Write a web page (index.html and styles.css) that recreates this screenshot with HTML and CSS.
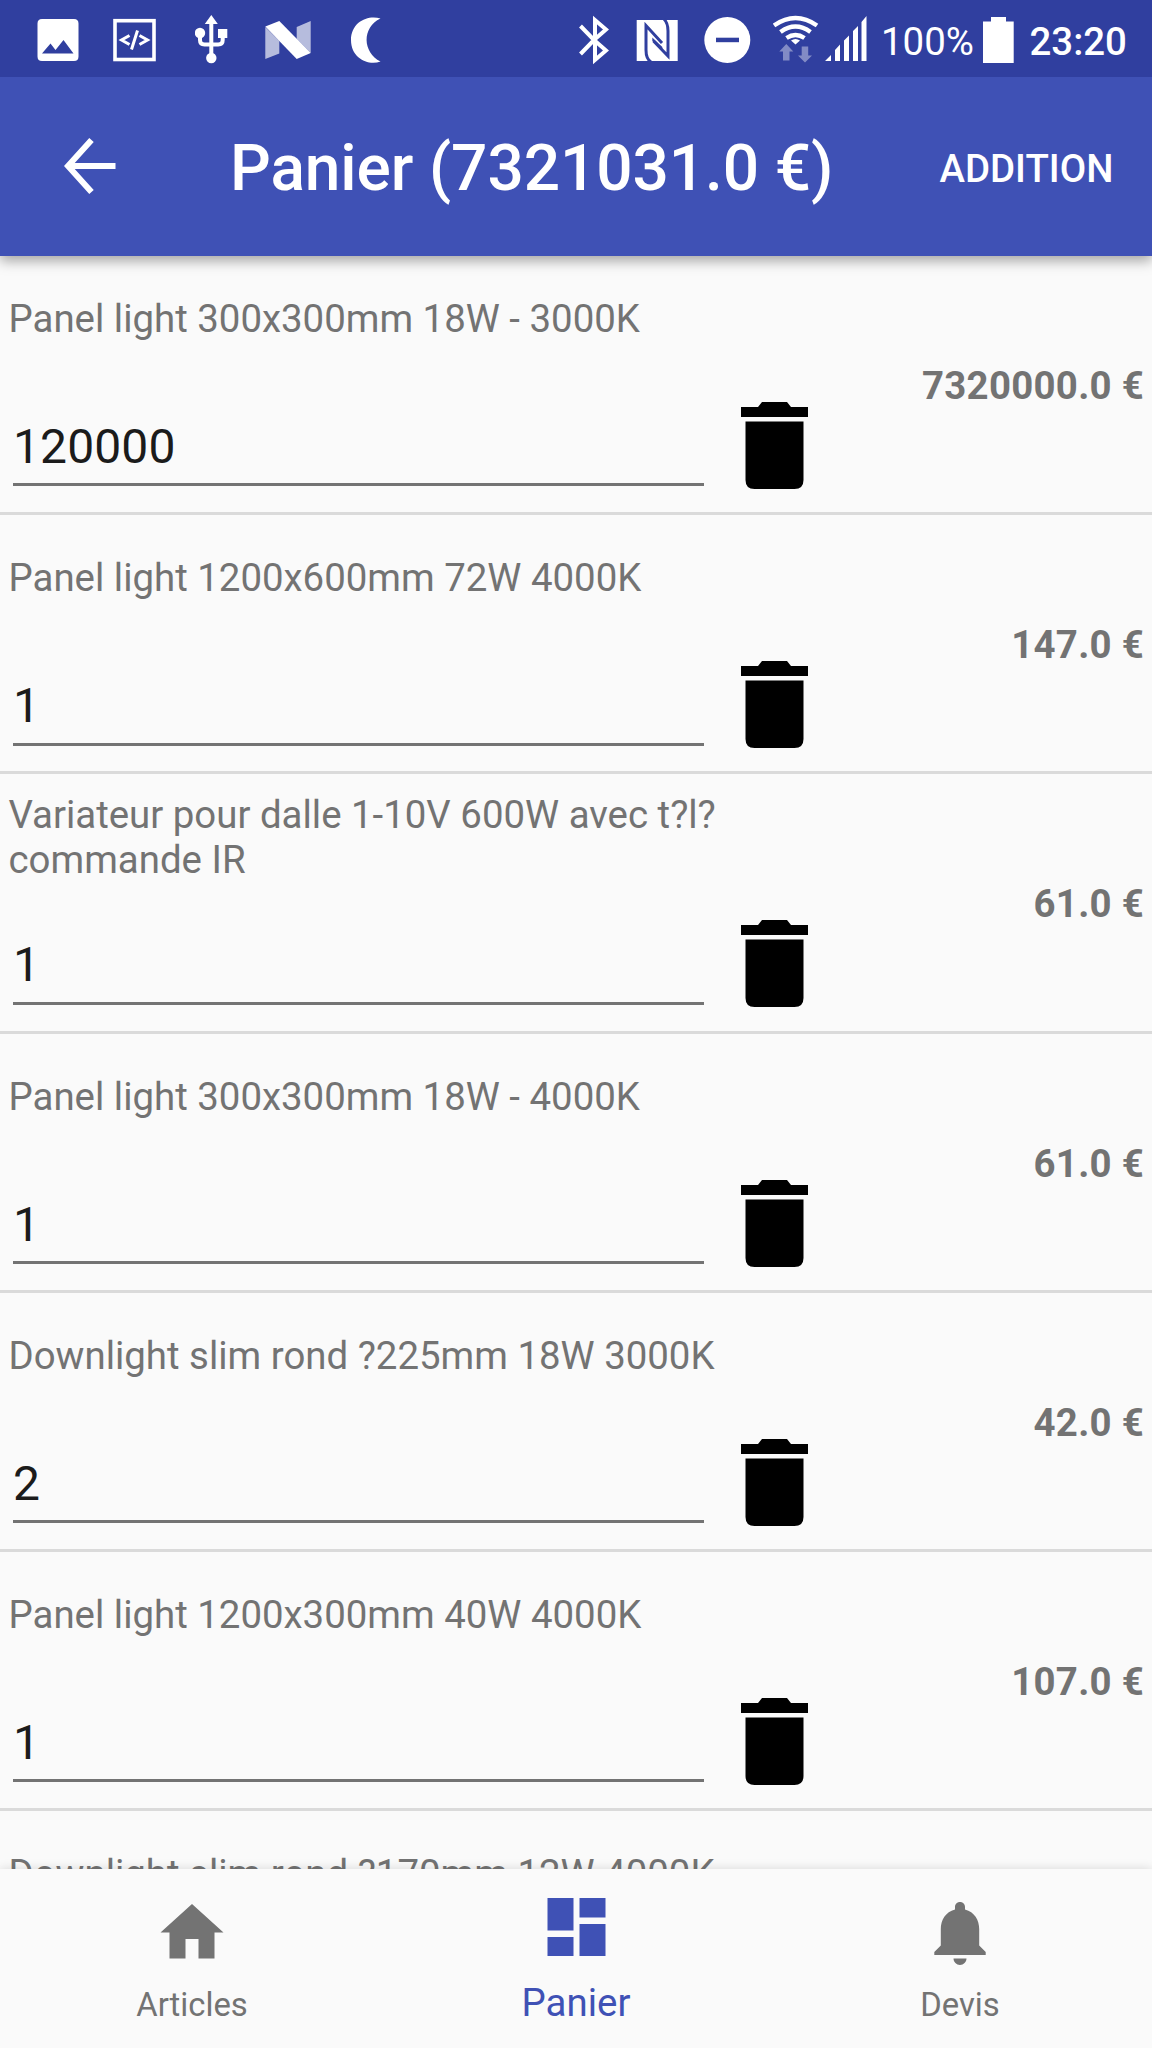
FILE: index.html
```html
<!DOCTYPE html>
<html lang="fr">
<head>
<meta charset="utf-8">
<title>Panier</title>
<link rel="stylesheet" href="styles.css">
</head>
<body>
<svg class="defs" aria-hidden="true">
  <symbol id="trash" viewBox="0 0 67 87" preserveAspectRatio="none">
    <path d="M0 5h17l4-5h25l4 5h17v10H0zM4.500 19.500h58v58.500q0 9-9 9h-40q-9 0-9-9z"/>
  </symbol>
</svg>
<div class="screen">
  <div class="status">
    <svg class="image" width="42" height="76" viewBox="37 0 42 76"><path fill="#fff" fill-rule="evenodd" d="M42 19h32q4.500 0 4.500 4.500v33q0 4.500-4.500 4.500h-32q-4.500 0-4.500-4.500v-33q0-4.500 4.500-4.500zM42 53.500h31.500l-10-13.500-8 10-5-6.500z"/></svg>
    <svg class="code" width="43" height="76" viewBox="113 0 43 76" fill="none" stroke="#fff"><rect x="115" y="20.700" width="39" height="38.800" stroke-width="3.600"/><path stroke-width="3" d="M129.500 35.500l-8 4.500 8 4.500M139.500 35.500l8 4.500-8 4.500M137.500 30.500l-6 19"/></svg>
    <svg class="usb" width="34" height="76" viewBox="195 0 34 76"><path fill="#fff" d="M211.300 15l6.500 9h-13zM218 29h9.300v9h-9.300z"/><circle cx="200" cy="33" r="5.200" fill="#fff"/><circle cx="211.300" cy="58" r="5.200" fill="#fff"/><path fill="none" stroke="#fff" stroke-width="4" d="M211.300 22v36M200 33v7q0 4.500 4.500 4.500h13.700q4.500 0 4.500-4.500v-7"/></svg>
    <svg class="nougat" width="46" height="76" viewBox="265 0 46 76" fill="#fff"><path opacity=".65" d="M265.300 27l14 14v12.500l-14 5.500zM310.700 21v32l-14-14v-12z"/><path d="M265.300 26.500l14-5.500 31.400 32-14 6z"/></svg>
    <svg class="moon" width="30" height="76" viewBox="351 0 30 76"><path fill="#fff" d="M380.500 18.500c-12-4-29.500 3-29.500 21.500s17.500 26 29.500 21.500c-18-9-19-34 0-43z"/></svg>
    <svg class="bt" width="30" height="76" viewBox="579 0 30 76"><path fill="none" stroke="#fff" stroke-width="4" d="M580.500 26l13.500 14 12-10.500-11-9.500v40l11-9.500-12-10.500-13.500 14"/></svg>
    <svg class="nfc" width="42" height="76" viewBox="636 0 42 76"><path fill="#fff" d="M636.700 20h41v41h-41z"/><path fill="none" stroke="#303f9f" stroke-width="3" d="M651 62q-5-3-5-12V25.500L662 43M664 19q4 4 4 12v25L653.500 41"/><path fill="#303f9f" d="M652.300 37.500l10 9.500v3l-10-9z"/></svg>
    <svg class="dnd" width="47" height="76" viewBox="704 0 47 76"><circle cx="727.300" cy="40" r="23" fill="#fff"/><path fill="#303f9f" d="M716 37.700h23v4.500h-23z"/></svg>
    <svg class="wifi" width="46" height="76" viewBox="773 0 46 76"><path fill="none" stroke="#fff" stroke-width="4.400" d="M774 25.500q21.500-15 43 0M780.500 32q15-11 30 0M786.500 38q9-6 18 0"/><path fill="#fff" d="M791 40.500q4.500-3 9 0l-4.500 4z"/><path fill="#fff" opacity=".4" d="M779.300 51.500l7-7.500 7 7.500h-3.800v9h-6.500v-9zM798 55.500l7 7 7-7h-3.800v-9h-6.500v9z"/></svg>
    <svg class="signal" width="42" height="76" viewBox="825 0 42 76"><path fill="#fff" d="M825 61l6-6v6zM835 61V50l5-5.500V61zM844 61V40.500l5-5V61zM853 61V31l5-5v35zM861.500 61V22l5-6v45z"/></svg>
    <span class="percent">100%</span>
    <svg class="battery" width="31" height="76" viewBox="983 0 31 76"><path fill="#fff" d="M991 17h15v4.500h7.700V63H983V21.500h8z"/></svg>
    <span class="clock">23:20</span>
  </div>
  <header class="toolbar">
    <svg class="back" width="52" height="58" viewBox="0 0 52 58"><path fill="none" stroke="#fff" stroke-width="6" d="M51.500 29H5M27.500 3L4 29 27.500 55"/></svg>
    <h1 class="title">Panier (7321031.0 €)</h1>
    <span class="action">ADDITION</span>
  </header>
  <main class="list">
    <div class="row"><div class="name">Panel light 300x300mm 18W - 3000K</div><div class="qty">120000</div><svg class="trash"><use href="#trash"/></svg><div class="price">7320000.0 €</div></div>
    <div class="row"><div class="name">Panel light 1200x600mm 72W 4000K</div><div class="qty">1</div><svg class="trash"><use href="#trash"/></svg><div class="price">147.0 €</div></div>
    <div class="row"><div class="name">Variateur pour dalle 1-10V 600W avec t?l?<br>commande IR</div><div class="qty">1</div><svg class="trash"><use href="#trash"/></svg><div class="price">61.0 €</div></div>
    <div class="row"><div class="name">Panel light 300x300mm 18W - 4000K</div><div class="qty">1</div><svg class="trash"><use href="#trash"/></svg><div class="price">61.0 €</div></div>
    <div class="row"><div class="name">Downlight slim rond ?225mm 18W 3000K</div><div class="qty">2</div><svg class="trash"><use href="#trash"/></svg><div class="price">42.0 €</div></div>
    <div class="row"><div class="name">Panel light 1200x300mm 40W 4000K</div><div class="qty">1</div><svg class="trash"><use href="#trash"/></svg><div class="price">107.0 €</div></div>
    <div class="row"><div class="name">Downlight slim rond ?170mm 12W 4000K</div></div>
  </main>
  <nav class="nav">
    <div class="tab">
      <svg class="home" width="64" height="55" viewBox="0 0 64 55"><path fill="#737373" d="M32 0l31.500 28.500H54.500V54.500H38.500V35H25.500V54.500H9.500V28.500H.5z"/></svg>
      <span>Articles</span>
    </div>
    <div class="tab active">
      <svg class="dash" width="59" height="58" viewBox="0 0 59 58"><path fill="#3f51b5" d="M.5 0h26v32.500H.5zM32.500 0h26v19.500h-26zM.5 39h26v19H.5zM32.500 26h26v32h-26z"/></svg>
      <span>Panier</span>
    </div>
    <div class="tab">
      <svg class="bell" width="52" height="63" viewBox="0 0 52 63"><path fill="#737373" d="M26 0c3 0 5 2.200 5 5v2.500C40.500 10 45.200 18 45.200 27v16.500L51.700 50v3H.3v-3l6.500-6.500V27C6.800 18 11.500 10 21 7.500V5c0-2.800 2-5 5-5zM19.500 56.500h13c0 3.500-3 6.500-6.500 6.500s-6.500-3-6.500-6.500z"/></svg>
      <span>Devis</span>
    </div>
  </nav>
</div>
</body>
</html>
```
FILE: styles.css
```css
* { box-sizing: border-box; }
body { margin: 0; background: #fafafa; font-family: Roboto, sans-serif; }
svg { display: block; flex: none; }
.defs { display: none; }
.screen { width: 1152px; height: 2048px; display: flex; flex-direction: column; overflow: hidden; }

.status { height: 76.8px; flex: none; display: flex; background: #303f9f; color: #fff; position: relative; z-index: 2; }
.image { margin-left: 37px; }
.code { margin-left: 34px; }
.usb { margin-left: 39px; }
.nougat { margin-left: 36px; }
.moon { margin-left: 40px; }
.bt { margin-left: 198px; }
.nfc { margin-left: 27px; }
.dnd { margin-left: 26px; }
.wifi { margin-left: 22px; }
.signal { margin-left: 6px; }
.percent, .clock { font-size: 38.4px; line-height: 44px; padding-top: 20px; white-space: nowrap; }
.percent { margin-left: 14px; width: 92px; }
.battery { margin-left: 10px; }
.clock { margin-left: 15.500px; font-weight: 500; }

.toolbar { height: 179.2px; flex: none; display: flex; align-items: center; background: #3f51b5; color: #fff; position: relative; z-index: 1; box-shadow: 0 5px 12px rgba(0,0,0,.34); }
.back { margin-left: 64px; }
.title { margin: 4px 0 0 114px; width: 610px; font-size: 64px; line-height: 75px; font-weight: 500; letter-spacing: -.1px; white-space: nowrap; }
.action { margin: 4px 0 0 99.500px; font-size: 38.4px; line-height: 45px; font-weight: 500; }

.list { flex: 1; min-height: 0; overflow: hidden; }
.row { height: 259.2px; border-bottom: 3.2px solid #dadada; display: grid; grid-template-columns: 741px 67px 1fr; grid-template-rows: 126px 130px; color: #737373; }
.name { grid-area: 1 / 1; align-self: center; padding-left: 8.500px; font-size: 38.4px; line-height: 45.500px; white-space: nowrap; }
.qty { grid-area: 2 / 1; margin: 37px 37px 0 13px; height: 67.500px; border-bottom: 3.2px solid #737373; font-size: 48px; line-height: 56px; letter-spacing: .1px; color: #1b1b1b; }
.trash { grid-area: 2 / 2; width: 67px; height: 87px; margin-top: 20px; }
.price { grid-area: 1 / 3 / 3 / 4; align-self: center; text-align: right; padding: 3px 8px 0 0; font-size: 38.4px; line-height: 45px; font-weight: 700; letter-spacing: .28px; }

.nav { height: 179.2px; flex: none; display: grid; grid-template-columns: repeat(3, 1fr); background: #fafafa; position: relative; box-shadow: 0 0 10px rgba(0,0,0,.14); }
.tab { display: flex; flex-direction: column; align-items: center; justify-content: flex-end; padding-bottom: 24px; font-size: 32.800px; line-height: 38px; color: #737373; }
.tab.active { font-size: 38.4px; line-height: 45px; padding-bottom: 23px; color: #3f51b5; }
.home { margin-bottom: 27px; }
.dash { margin-bottom: 24px; }
.bell { margin-bottom: 21px; }
```
